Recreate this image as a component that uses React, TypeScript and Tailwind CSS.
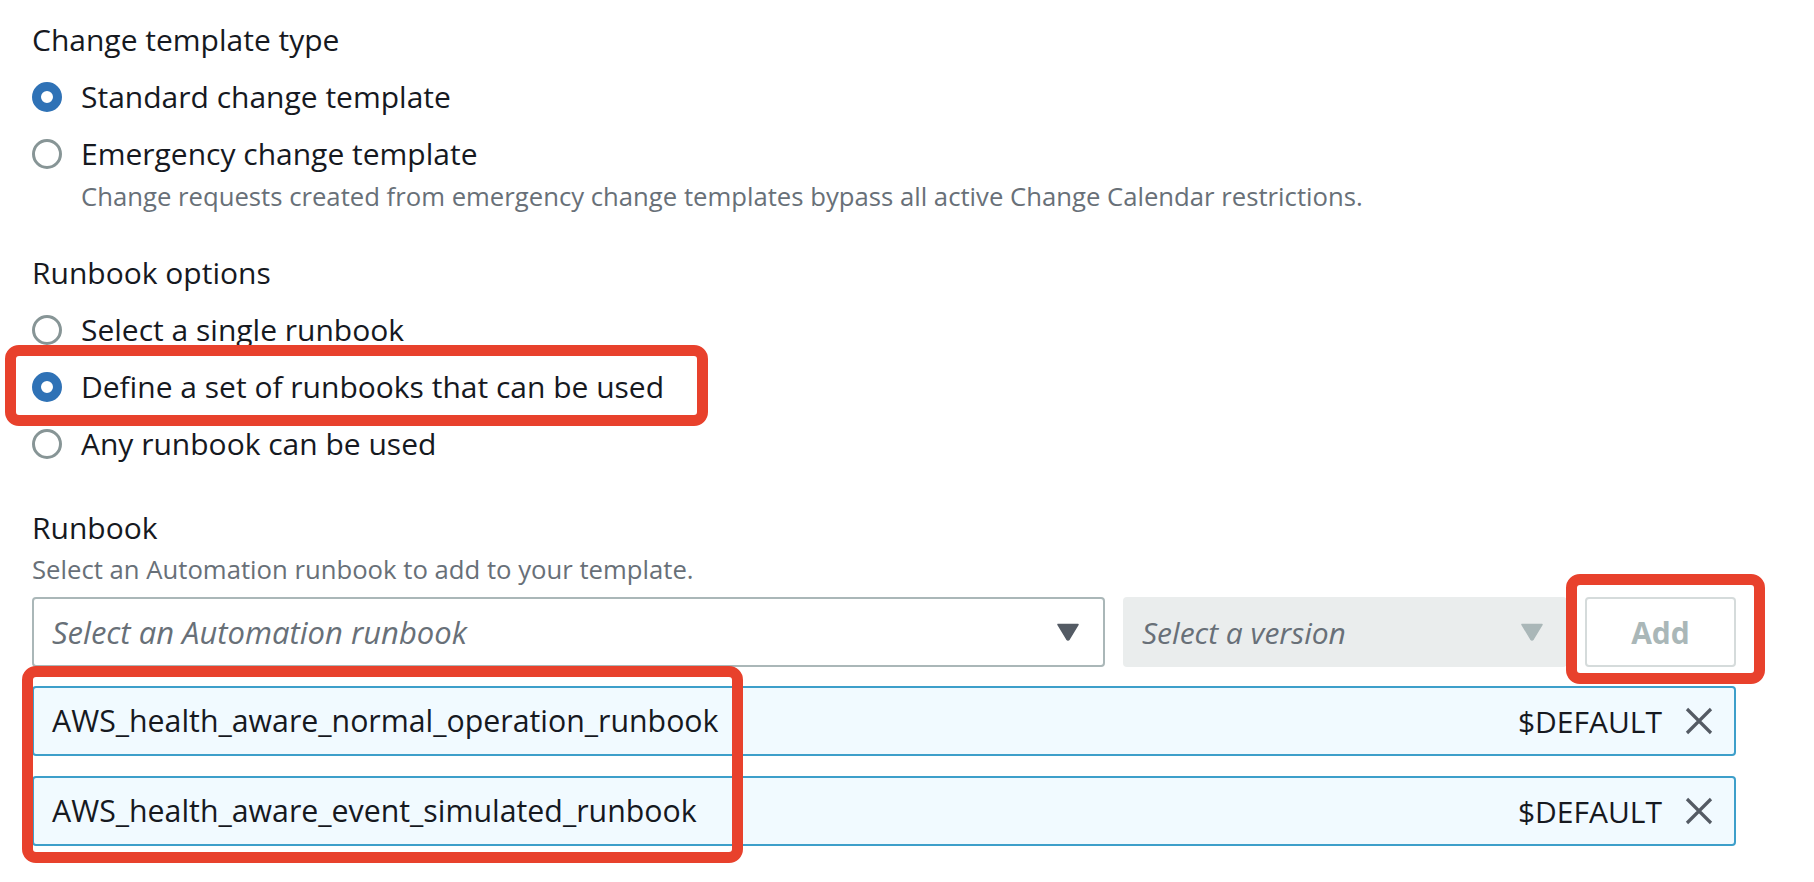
import React from "react";

const font = { fontFamily: '"Open Sans", "Noto Sans", sans-serif' };

function Radio({ checked }: { checked?: boolean }) {
  return checked ? (
    <span className="block w-[30px] h-[30px] rounded-full border-[9px] border-[#2f72b6] bg-white shrink-0" />
  ) : (
    <span className="block w-[30px] h-[30px] rounded-full border-[3px] border-[#879596] bg-white shrink-0" />
  );
}

function Option({ label, checked, desc }: { label: string; checked?: boolean; desc?: string }) {
  return (
    <div className="flex flex-col">
      <div className="flex items-center gap-[19px] h-[42px]">
        <Radio checked={checked} />
        <span className="text-[30px] leading-[42px] text-[#16191f]">{label}</span>
      </div>
      {desc && (
        <div className="pl-[49px] mt-[4px] text-[25.7px] leading-[36px] text-[#687078]">{desc}</div>
      )}
    </div>
  );
}

function Caret({ color }: { color: string }) {
  return (
    <svg width="24" height="18" viewBox="0 0 24 18">
      <path d="M2 1.5 H22 L13.2 16.2 Q12 17.8 10.8 16.2 Z" fill={color} stroke={color} strokeWidth="1.5" strokeLinejoin="round" />
    </svg>
  );
}

function XIcon() {
  return (
    <svg width="28" height="28" viewBox="0 0 28 28">
      <path d="M2 2 L26 26 M26 2 L2 26" stroke="#545b64" strokeWidth="3.2" strokeLinecap="butt" />
    </svg>
  );
}

function Token({ name }: { name: string }) {
  return (
    <div className="h-[70px] rounded-[4px] border-2 border-[#3d9fca] bg-[#f1faff] flex items-center pl-[18px] pr-[21px]">
      <span className="flex-1 text-[30.3px] text-[#16191f]">{name}</span>
      <span className="text-[30px] text-[#16191f]">$DEFAULT</span>
      <span className="ml-[23px] flex items-center">
        <XIcon />
      </span>
    </div>
  );
}

export default function App() {
  return (
    <div className="relative w-[1814px] h-[882px] bg-white overflow-hidden" style={font}>
      <div className="pl-[32px] pt-[20px] w-[1736px] flex flex-col">
        <div className="text-[30px] leading-[40px] text-[#16191f]">Change template type</div>
        <div className="mt-[16px] flex flex-col gap-[15px]">
          <Option label="Standard change template" checked />
          <Option
            label="Emergency change template"
            desc="Change requests created from emergency change templates bypass all active Change Calendar restrictions."
          />
        </div>

        <div className="mt-[38px] text-[30px] leading-[40px] text-[#16191f]">Runbook options</div>
        <div className="mt-[16px] flex flex-col gap-[15px]">
          <Option label="Select a single runbook" />
          <Option label="Define a set of runbooks that can be used" checked />
          <Option label="Any runbook can be used" />
        </div>

        <div className="mt-[43px] text-[30px] leading-[40px] text-[#16191f]">Runbook</div>
        <div className="mt-[4px] text-[25.7px] leading-[36px] text-[#687078]">
          Select an Automation runbook to add to your template.
        </div>

        <div className="mt-[9px] flex gap-[18px] h-[70px]">
          <div className="flex-1 rounded-[4px] border-2 border-[#aab7b8] bg-white flex items-center pl-[18px] pr-[23px]">
            <span className="flex-1 italic text-[31px] text-[#687078]">Select an Automation runbook</span>
            <Caret color="#545b64" />
          </div>
          <div className="w-[444px] rounded-[4px] bg-[#eaeded] flex items-center pl-[19px] pr-[23px]">
            <span className="flex-1 italic text-[30px] text-[#687078]">Select a version</span>
            <Caret color="#aab7b8" />
          </div>
          <div className="w-[151px] rounded-[4px] border-2 border-[#d5dbdb] bg-white flex items-center justify-center">
            <span className="font-bold text-[30px] text-[#aab7b8]">Add</span>
          </div>
        </div>

        <div className="mt-[19px] flex flex-col gap-[20px]">
          <Token name="AWS_health_aware_normal_operation_runbook" />
          <Token name="AWS_health_aware_event_simulated_runbook" />
        </div>
      </div>

      <div className="absolute left-[5px] top-[345px] w-[703px] h-[81px] rounded-[14px] border-[11px] border-[#e8412c]" />
      <div className="absolute left-[1566px] top-[574px] w-[199px] h-[110px] rounded-[14px] border-[11px] border-[#e8412c]" />
      <div className="absolute left-[22px] top-[666px] w-[721px] h-[197px] rounded-[14px] border-[11px] border-[#e8412c]" />
    </div>
  );
}
